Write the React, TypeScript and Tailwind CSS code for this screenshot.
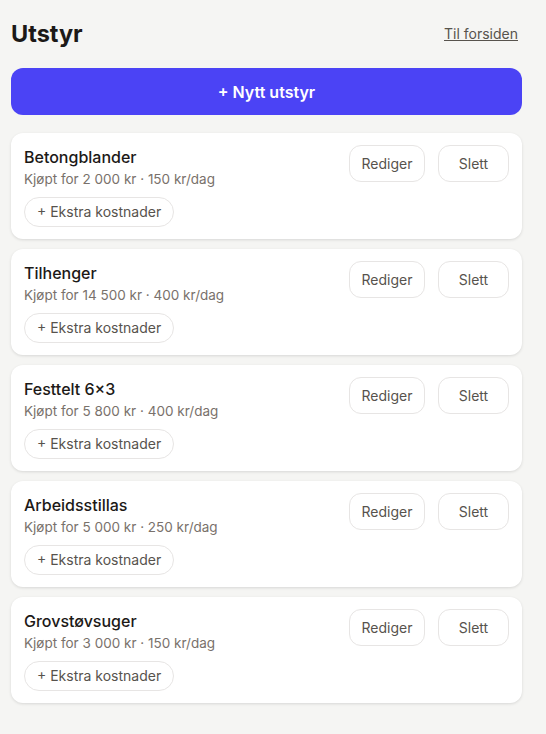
import React from 'react';

interface Equipment {
  id: number;
  name: string;
  price: string;
  daily: string;
}

const items: Equipment[] = [
  { id: 1, name: 'Betongblander', price: '2 000', daily: '150' },
  { id: 2, name: 'Tilhenger', price: '14 500', daily: '400' },
  { id: 3, name: 'Festtelt 6×3', price: '5 800', daily: '400' },
  { id: 4, name: 'Arbeidsstillas', price: '5 000', daily: '250' },
  { id: 5, name: 'Grovstøvsuger', price: '3 000', daily: '150' },
];

const EquipmentCard: React.FC<{ item: Equipment }> = ({ item }) => (
  <div className="bg-white rounded-xl shadow-[0_1px_3px_rgba(0,0,0,0.12)] px-[13px] py-3 flex justify-between items-start">
    <div>
      <div className="text-base leading-6 font-medium text-stone-900">{item.name}</div>
      <div className="text-[13.5px] leading-5 text-stone-500">
        Kjøpt for {item.price} kr · {item.daily} kr/dag
      </div>
      <button className="mt-2 h-[30px] px-[12px] rounded-full border border-stone-200 text-sm text-stone-600 bg-white">
        + Ekstra kostnader
      </button>
    </div>
    <div className="flex gap-[13px]">
      <button className="h-[37px] w-[76px] rounded-xl border border-stone-200 text-sm text-stone-600 bg-white">
        Rediger
      </button>
      <button className="h-[37px] w-[71px] rounded-xl border border-stone-200 text-sm text-stone-600 bg-white">
        Slett
      </button>
    </div>
  </div>
);

export default function App() {
  return (
    <div className="min-h-screen w-full bg-[#f5f5f3] pl-[11px] pr-[24px] pt-[18px] pb-8 font-['Inter',sans-serif]">
      <div className="flex justify-between items-center h-8">
        <h1 className="text-[23.5px] font-bold text-stone-900">Utstyr</h1>
        <a href="#" className="text-sm text-stone-600 underline pr-1">
          Til forsiden
        </a>
      </div>
      <button className="mt-[18px] w-full h-[47px] rounded-xl bg-[#4b43f5] text-white text-base font-semibold">
        + Nytt utstyr
      </button>
      <div className="mt-[18px] flex flex-col gap-[10px]">
        {items.map(item => (
          <EquipmentCard key={item.id} item={item} />
        ))}
      </div>
    </div>
  );
}
